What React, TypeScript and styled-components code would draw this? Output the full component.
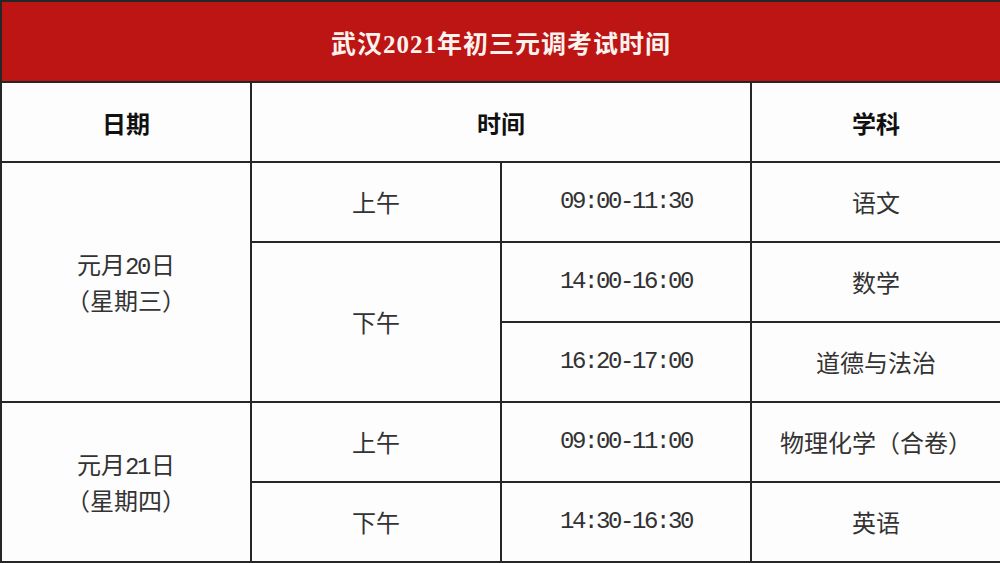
import React from "react";
import styled, { createGlobalStyle } from "styled-components";

const Global = createGlobalStyle`
  html, body { margin: 0; padding: 0; background: #ffffff; }
  body { width: 1000px; height: 563px; overflow: hidden; }
`;

const Table = styled.table`
  width: 1000px;
  border-collapse: collapse;
  table-layout: fixed;
  font-family: "Noto Sans CJK SC", "Noto Sans", sans-serif;
  color: #333333;
  background: #fdfdfd;
  border: 2px solid #262626;
`;

const Row = styled.tr<{ $h?: number }>`
  height: ${(p) => p.$h ?? 80}px;
`;

const TitleCell = styled.th`
  background: #bd1414;
  color: #fbf3ee;
  font-family: "Liberation Serif", "Noto Sans CJK SC", serif;
  font-weight: 700;
  font-size: 25px;
  letter-spacing: 1px;
  text-align: center;
  border: 2px solid #262626;
  padding: 0;
`;

const HeadCell = styled.th`
  font-weight: 700;
  font-size: 24px;
  color: #111;
  text-align: center;
  border: 2px solid #262626;
  padding: 0;
`;

const Cell = styled.td<{ $mono?: boolean }>`
  text-align: center;
  vertical-align: middle;
  border: 2px solid #262626;
  padding: 0;
  font-size: 24px;
  font-family: ${(p) =>
    p.$mono
      ? `"Liberation Mono", "DejaVu Sans Mono", monospace`
      : `"Noto Sans CJK SC", "Noto Sans", sans-serif`};
  letter-spacing: ${(p) => (p.$mono ? "-2.4px" : "0")};
  line-height: 32px;
  font-weight: 400;
`;

const Digits = styled.span`
  font-family: "Liberation Mono", monospace;
  font-size: 24px;
  letter-spacing: -2.4px;
  margin-right: 2px;
  line-height: 32px;
`;

export default function App() {
  return (
    <>
      <Global />
      <Table>
        <colgroup>
          <col style={{ width: 250 }} />
          <col style={{ width: 250 }} />
          <col style={{ width: 250 }} />
          <col style={{ width: 250 }} />
        </colgroup>
        <tbody>
          <Row $h={81}>
            <TitleCell colSpan={4}>武汉2021年初三元调考试时间</TitleCell>
          </Row>
          <Row>
            <HeadCell>日期</HeadCell>
            <HeadCell colSpan={2}>时间</HeadCell>
            <HeadCell>学科</HeadCell>
          </Row>
          <Row>
            <Cell rowSpan={3}>
              元月<Digits>20</Digits>日
              <br />
              （星期三）
            </Cell>
            <Cell>上午</Cell>
            <Cell $mono>09:00-11:30</Cell>
            <Cell>语文</Cell>
          </Row>
          <Row>
            <Cell rowSpan={2}>下午</Cell>
            <Cell $mono>14:00-16:00</Cell>
            <Cell>数学</Cell>
          </Row>
          <Row>
            <Cell $mono>16:20-17:00</Cell>
            <Cell>道德与法治</Cell>
          </Row>
          <Row>
            <Cell rowSpan={2}>
              元月<Digits>21</Digits>日
              <br />
              （星期四）
            </Cell>
            <Cell>上午</Cell>
            <Cell $mono>09:00-11:00</Cell>
            <Cell>物理化学（合卷）</Cell>
          </Row>
          <Row>
            <Cell>下午</Cell>
            <Cell $mono>14:30-16:30</Cell>
            <Cell>英语</Cell>
          </Row>
        </tbody>
      </Table>
    </>
  );
}
